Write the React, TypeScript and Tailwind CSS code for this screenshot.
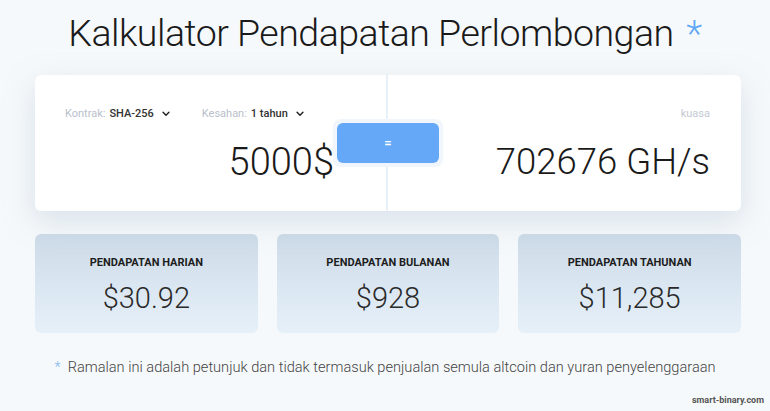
import React from 'react';

const ChevronDown = () => (
    <svg width="10" height="10" viewBox="0 0 24 24" fill="none" stroke="#222" strokeWidth="3.5" strokeLinecap="round" strokeLinejoin="round" className="ml-[7px]">
        <path d="M5 8l7 7 7-7" />
    </svg>
);

const stats = [
    { label: 'Pendapatan harian', value: '$30.92' },
    { label: 'Pendapatan bulanan', value: '$928' },
    { label: 'Pendapatan tahunan', value: '$11,285' },
];

export default function App() {
    return (
        <main
            className="relative w-[770px] h-[411px] overflow-hidden bg-[#f6f9fb] text-[#1a1a1a]"
            style={{ fontFamily: 'Roboto, "Liberation Sans", sans-serif' }}
        >
            <h1 className="pt-[10px] text-center text-[37.5px] font-light leading-[46px] tracking-[-0.5px]">
                Kalkulator Pendapatan Perlombongan <span className="ml-[4px] text-[#5fa8f5]">*</span>
            </h1>

            <section className="relative ml-[35px] mt-[19px] flex h-[136px] w-[706px] rounded-md bg-white shadow-[0_10px_30px_rgba(160,180,200,0.35)]">
                <div className="flex w-[353px] flex-col border-r-2 border-[#e8f1f8] pl-[30px] pr-[52px] pt-[31px]">
                    <div className="flex items-center text-[11px] leading-4">
                        <span className="text-[#b9c0cc]">Kontrak:</span>
                        <span className="ml-1 font-medium text-[#333]">SHA-256</span>
                        <ChevronDown />
                        <span className="ml-[31px] text-[#b9c0cc]">Kesahan:</span>
                        <span className="ml-1 font-medium text-[#333]">1 tahun</span>
                        <ChevronDown />
                    </div>
                    <div className="mt-[18px] text-right text-[38px] font-light leading-[44px]">5000$</div>
                </div>
                <div className="flex flex-1 flex-col items-end pr-[31px] pt-[31px]">
                    <div className="text-[11px] leading-4 text-[#c3c9d2]">kuasa</div>
                    <div className="mt-[18px] text-[36.5px] font-light leading-[44px]">702676 GH/s</div>
                </div>

                <div className="absolute left-[298px] top-[44px] rounded-lg bg-[#f0f6fc] p-[4px]">
                    <button className="flex h-[40px] w-[102px] items-center justify-center rounded-md bg-[#64a8f7] text-[13px] font-bold text-white">
                        =
                    </button>
                </div>
            </section>

            <section className="ml-[35px] mt-[23px] grid w-[706px] grid-cols-3 gap-[19px]">
                {stats.map((s) => (
                    <div
                        key={s.label}
                        className="flex h-[99px] flex-col items-center rounded-md bg-gradient-to-b from-[#cddbe8] to-[#e6f0f9] pt-[21px]"
                    >
                        <div className="text-[11px] font-bold uppercase leading-4 text-[#1d1d1d]">{s.label}</div>
                        <div className="mt-[11px] text-[29px] font-light leading-8 text-[#2a2a2a]">{s.value}</div>
                    </div>
                ))}
            </section>

            <p className="mt-[24px] flex justify-center text-[14.6px] font-light leading-5 text-[#444]">
                <span className="mr-[7px] text-[#7fb3ee]">*</span>
                <span>Ramalan ini adalah petunjuk dan tidak termasuk penjualan semula altcoin dan yuran penyelenggaraan</span>
            </p>

            <div className="absolute bottom-[4px] right-[6px] text-[9px] font-bold text-[#555]">smart-binary.com</div>
        </main>
    );
}
